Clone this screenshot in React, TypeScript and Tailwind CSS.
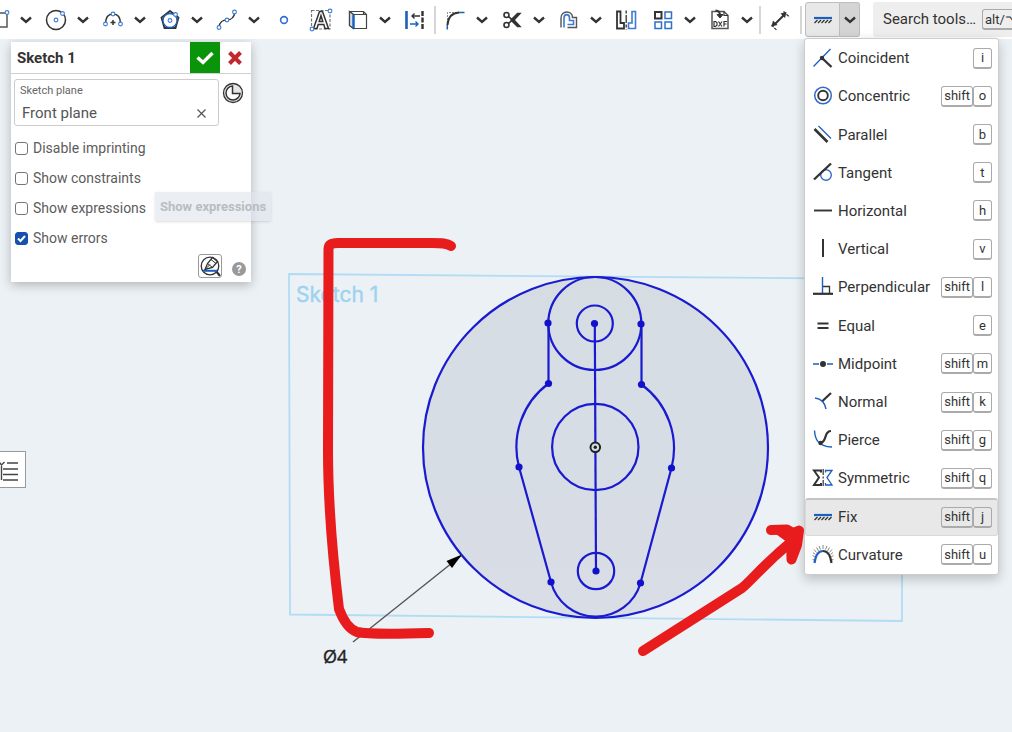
import React from "react";

const INK = "#333333";
const BLUE = "#1b5fbf";
const SKETCH = "#1a1ad0";

type IconProps = { children: React.ReactNode };

function Icon({ children }: IconProps) {
  return (
    <svg width="24" height="24" viewBox="0 0 24 24" fill="none" stroke={INK} strokeWidth="1.5" className="shrink-0" aria-hidden="true">
      {children}
    </svg>
  );
}

function Handle({ x, y, r = 1.9 }: { x: number; y: number; r?: number }) {
  return <circle cx={x} cy={y} r={r} fill="#fff" stroke="#3f7bd0" strokeWidth="1.1" />;
}

const toolIcons = {
  rectangle: (
    <Icon>
      <rect x="3" y="5" width="17" height="14" stroke="#555" />
      <Handle x={20} y={4.5} />
    </Icon>
  ),
  circle: (
    <Icon>
      <circle cx="12" cy="12" r="9.5" />
      <Handle x={12} y={12} />
      <Handle x={18.5} y={5.5} />
    </Icon>
  ),
  arc: (
    <Icon>
      <path d="M4.5 16C4.5 9 7 6 12 6s7.500 3 7.500 10" />
      <path d="M12 12v5M9.500 14.500h5" />
      <Handle x={4.5} y={16} />
      <Handle x={12} y={6} />
      <Handle x={19.5} y={16} />
    </Icon>
  ),
  polygon: (
    <Icon>
      <path d="M12 3L20.500 9.500L17.500 20H6.500L3.500 9.500Z" strokeWidth="1.8" />
      <circle cx="12" cy="12.500" r="7" stroke={BLUE} strokeWidth="1.3" fill="#fff" />
      <Handle x={12} y={12.5} />
      <Handle x={17.5} y={6.5} />
    </Icon>
  ),
  spline: (
    <Icon>
      <path d="M4 19C5 13 8 12 12 12S19 10 20 4" />
      <Handle x={4} y={19.5} />
      <Handle x={12} y={12} />
      <Handle x={19.5} y={4} />
    </Icon>
  ),
  point: (
    <Icon>
      <circle cx="12" cy="12" r="3.400" stroke="#2f70cc" strokeWidth="1.600" />
    </Icon>
  ),
  text: (
    <Icon>
      <rect x="2.500" y="2.500" width="18.500" height="18.500" stroke="#777" strokeWidth="1.200" strokeDasharray="3 1.500" />
      <path d="M4.500 20.500L10.500 3.500h3L19.500 20.500h-3.500L14.800 16.500H9.200L8 20.500ZM10.200 13.500h3.600L12 7.500Z" fill="#fff" />
      <Handle x={21} y={3} />
      <Handle x={3} y={21} />
    </Icon>
  ),
  use: (
    <Icon>
      <path d="M3.500 3.500h14l3 3v14h-13l-4-3ZM3.500 3.500l4 3h13M17.500 3.500v3" stroke="#444" strokeWidth="1.200" />
      <path d="M3.500 3.500l4 3v14l-4-3Z" stroke="#444" strokeWidth="1.200" fill="#cfdcf0" />
      <path d="M7.500 6.500v14" stroke={BLUE} strokeWidth="2.400" />
    </Icon>
  ),
  extend: (
    <Icon>
      <path d="M3.500 3v18" stroke={BLUE} strokeWidth="2.600" />
      <path d="M19.500 3v18" strokeWidth="2.400" strokeDasharray="5 1.500" />
      <path d="M17 8H9M11.500 5.500L9 8l2.500 2.500" strokeWidth="1.400" />
      <path d="M7 16h8M12.500 13.500L15 16l-2.500 2.500" stroke={BLUE} strokeWidth="1.400" />
    </Icon>
  ),
  fillet: (
    <Icon>
      <path d="M4.500 18V4.500H17" stroke="#888" strokeWidth="1" strokeDasharray="2 1" />
      <path d="M4.500 17C5 9 9 5 16 4.500" strokeWidth="2" />
      <path d="M4.300 21.500v-4.500M16 4.500h5.500" stroke={BLUE} strokeWidth="1.500" />
    </Icon>
  ),
  trim: (
    <Icon>
      <g strokeWidth="1.600">
        <circle cx="6.500" cy="7" r="2.500" />
        <circle cx="6.500" cy="17" r="2.500" />
        <path d="M8.500 8.500L12.500 12L8.500 15.500" />
      </g>
      <path d="M11 12L17.500 5.500h2.500L14 12L20 18.500H17.500Z" fill={INK} />
    </Icon>
  ),
  offset: (
    <Icon>
      <path d="M4 19.500V10C4 2 15.500 2 15.500 9.500H19.500V19.500H10.500" stroke="#555" strokeWidth="1.400" />
      <path d="M7 19.500V10C7 5.500 12.500 5.500 12.500 10V12.500H16.500V16.500H10.500" stroke="#3f7bd0" strokeWidth="1.600" />
    </Icon>
  ),
  mirror: (
    <Icon>
      <path d="M3 3.500h3.500v11.500h3.500v5.500H3Z" strokeWidth="1.800" />
      <path d="M12.200 2.500v19" strokeWidth="1.300" strokeDasharray="3 1.500 8 1.500" />
      <path d="M21.500 3.500H18v11.500h-3.500v5.500h7Z" stroke="#3f7bd0" strokeWidth="1.600" />
    </Icon>
  ),
  pattern: (
    <Icon>
      <rect x="4" y="4" width="6.500" height="6.500" strokeWidth="2" />
      <g stroke="#2f70cc" strokeWidth="1.500">
        <rect x="14" y="4" width="6.500" height="6.500" />
        <rect x="4" y="14" width="6.500" height="6.500" />
        <rect x="14" y="14" width="6.500" height="6.500" />
      </g>
    </Icon>
  ),
  dxf: (
    <Icon>
      <path d="M4 3.500h12l4 4V20.500H4Z" stroke="#555" />
      <path d="M16 3.500v4h4" strokeWidth="1.200" />
      <path d="M7.500 2.500c3 0 4.500 2 4.500 5" strokeWidth="2" />
      <path d="M9 6.500l3 3.500l3-3.500Z" fill={INK} strokeWidth="1" />
      <g strokeWidth="1.200">
        <path d="M6 13.500v5h1.500l1.500-1.200v-2.600l-1.500-1.200ZM10.500 13.500l3.500 5M14 13.500l-3.500 5M16 18.500v-5h3M16 16h2.500" />
      </g>
    </Icon>
  ),
  dimension: (
    <Icon>
      <path d="M6.500 16.500L16 7" strokeWidth="2" />
      <path d="M3.500 18.500l1.500-6 4.500 4.500ZM18.500 4l-6 1.500 4.500 4.500Z" fill={INK} stroke="none" />
      <path d="M3.500 17l5 5M15.500 3.500l6 5.500" strokeWidth="1.200" strokeDasharray="3 1" />
    </Icon>
  ),
};

const fixIcon = (
  <Icon>
    <path d="M3 10h18" stroke={BLUE} strokeWidth="2.200" />
    <path d="M3.500 15l3-3M7 15l3-3M10.500 15l3-3M14 15l3-3M17.500 15l3-3" strokeWidth="1.300" />
  </Icon>
);

type Constraint = { label: string; keys: string[]; icon: React.ReactNode };

const constraints: Constraint[] = [
  {
    label: "Coincident",
    keys: ["i"],
    icon: (
      <Icon>
        <path d="M2.500 20.500L19.500 3" stroke={BLUE} strokeWidth="1.300" />
        <path d="M11 12l9.500 9" strokeWidth="2.400" />
        <circle cx="11" cy="12" r="2.200" fill={INK} stroke="none" />
      </Icon>
    ),
  },
  {
    label: "Concentric",
    keys: ["shift", "o"],
    icon: (
      <Icon>
        <circle cx="12" cy="11.500" r="8.300" stroke="#2f6cc8" strokeWidth="1.500" />
        <circle cx="12" cy="11.500" r="4.800" strokeWidth="1.900" />
      </Icon>
    ),
  },
  {
    label: "Parallel",
    keys: ["b"],
    icon: (
      <Icon>
        <path d="M3.500 6L16.500 19" strokeWidth="2.600" />
        <path d="M7.500 3L20 15.500" stroke={BLUE} strokeWidth="1.300" />
      </Icon>
    ),
  },
  {
    label: "Tangent",
    keys: ["t"],
    icon: (
      <Icon>
        <circle cx="15" cy="14" r="5.300" stroke="#2f6cc8" strokeWidth="1.400" />
        <path d="M3 18.500L20 2.500" strokeWidth="2.400" />
      </Icon>
    ),
  },
  { label: "Horizontal", keys: ["h"], icon: <Icon><path d="M3 11.500h18" strokeWidth="1.900" /></Icon> },
  { label: "Vertical", keys: ["v"], icon: <Icon><path d="M12 2v18" strokeWidth="2" /></Icon> },
  {
    label: "Perpendicular",
    keys: ["shift", "l"],
    icon: (
      <Icon>
        <path d="M12 11.500h6.500v6.500" strokeWidth="1.300" />
        <path d="M11.500 2v16" stroke={BLUE} strokeWidth="1.400" />
        <path d="M2 18.800h20" strokeWidth="2.200" />
      </Icon>
    ),
  },
  { label: "Equal", keys: ["e"], icon: <Icon><path d="M6.500 9.500h11M6.500 14h11" strokeWidth="2" /></Icon> },
  {
    label: "Midpoint",
    keys: ["shift", "m"],
    icon: (
      <Icon>
        <path d="M2 12h6M16 12h6" stroke={BLUE} />
        <circle cx="12" cy="12" r="3" fill={INK} stroke="none" />
      </Icon>
    ),
  },
  {
    label: "Normal",
    keys: ["shift", "k"],
    icon: (
      <Icon>
        <path d="M4 8C11 9 14 13 15 19" stroke={BLUE} strokeWidth="1.500" />
        <path d="M11.500 11L20 3" strokeWidth="2.300" />
      </Icon>
    ),
  },
  {
    label: "Pierce",
    keys: ["shift", "g"],
    icon: (
      <Icon>
        <path d="M3.500 2.500C4 10 6 18.500 21 19" stroke={BLUE} strokeWidth="1.400" />
        <path d="M10 15C16 13 13 3 20 3" strokeWidth="2.200" />
        <circle cx="9.500" cy="15" r="2.200" fill={INK} stroke="none" />
      </Icon>
    ),
  },
  {
    label: "Symmetric",
    keys: ["shift", "q"],
    icon: (
      <Icon>
        <path d="M10 6.500V4.500H3L8 11.500L3 19h7v-2" strokeWidth="2" />
        <path d="M12.200 3v17" strokeWidth="1.200" strokeDasharray="6 1.500 2 1.500" />
        <path d="M14.500 6.500V4.500H21L16 11.500L21 19h-6.500v-2" stroke={BLUE} strokeWidth="1.300" />
      </Icon>
    ),
  },
  { label: "Fix", keys: ["shift", "j"], icon: fixIcon },
  {
    label: "Curvature",
    keys: ["shift", "u"],
    icon: (
      <Icon>
        <path
          d="M4 14l-2.500-1.500M4.500 11.500L2 9.500M5.500 9.500L3 6.500M7.500 8L5.500 4.500M9.500 6.500L8 3M12 6V2M14.500 6.500L16 3M16.500 8l2-3.500M18.500 9.500L21 6.500M19.500 11.500l2.500-2M20 14l2.500-1.500M3.500 17l-2-.5M20.500 17l2-.5"
          stroke="#888"
          strokeWidth="1"
        />
        <path d="M12 8C17 8 19.500 13 20.500 20" strokeWidth="2.200" />
        <path d="M3.500 20C4.500 13 7 8 12 8" stroke={BLUE} strokeWidth="2.200" />
      </Icon>
    ),
  },
];

function Chevron() {
  return (
    <svg width="12" height="8" viewBox="0 0 12 8" fill="none" stroke={INK} strokeWidth="2.400" aria-hidden="true">
      <path d="M1 1.500L6 6l5-4.500" />
    </svg>
  );
}

function Tool({ name, label, menu = false }: { name: keyof typeof toolIcons; label: string; menu?: boolean }) {
  return (
    <div className="flex shrink-0">
      <button type="button" aria-label={label} className="flex h-8 w-[34px] items-center justify-center">
        {toolIcons[name]}
      </button>
      {menu && (
        <button type="button" aria-label={`${label} options`} className="flex h-8 w-5 items-center justify-center">
          <Chevron />
        </button>
      )}
    </div>
  );
}

function Key({ children }: { children: React.ReactNode }) {
  return (
    <kbd className="flex h-[21px] min-w-[19px] shrink-0 items-center justify-center rounded-[3px] border border-b-2 border-[#aaaaaa] px-0.5 font-[Roboto,sans-serif] text-[13px] leading-none whitespace-nowrap text-[#333333]">
      {children}
    </kbd>
  );
}

function ConstraintMenu() {
  return (
    <ul className="absolute top-9 -left-px z-20 grid min-h-[537px] w-[195px] auto-rows-fr rounded-[3px] border border-[#cccccc] bg-white shadow-[0_4px_12px_rgba(0,0,0,0.22)]">
      {constraints.map((c) => (
        <li key={c.label} className="flex">
          <button
            type="button"
            className={
              c.label === "Fix"
                ? "flex flex-1 items-center rounded-[3px] border border-t-2 border-[#d8d8d8] border-t-[#c4c4c4] bg-[#e8e8e8] px-[5px]"
                : "flex flex-1 items-center px-1.5"
            }
          >
            {c.icon}
            <span className="ml-[3px] flex-1 text-left text-[15px] leading-5">{c.label}</span>
            <span className="flex">
              {c.keys.map((k) => (
                <Key key={k}>{k}</Key>
              ))}
            </span>
          </button>
        </li>
      ))}
    </ul>
  );
}

function Separator({ last = false }: { last?: boolean }) {
  return <div className={last ? "h-7 w-0.5 shrink-0 bg-[#d6d6d6]" : "-mx-px h-7 w-0.5 shrink-0 bg-[#d6d6d6]"} />;
}

function Toolbar() {
  return (
    <header className="relative z-10 flex h-[39px] items-center gap-[3px] bg-white">
      <div className="-ml-[18px]">
        <Tool name="rectangle" label="Rectangle" menu />
      </div>
      <Tool name="circle" label="Circle" menu />
      <Tool name="arc" label="Arc" menu />
      <Tool name="polygon" label="Polygon" menu />
      <Tool name="spline" label="Spline" menu />
      <Tool name="point" label="Point" />
      <Tool name="text" label="Text" />
      <Tool name="use" label="Use" menu />
      <Tool name="extend" label="Construction" />
      <Separator />
      <Tool name="fillet" label="Fillet" menu />
      <Tool name="trim" label="Trim" menu />
      <Tool name="offset" label="Offset" menu />
      <Tool name="mirror" label="Mirror" />
      <Tool name="pattern" label="Pattern" menu />
      <Tool name="dxf" label="Insert DXF" menu />
      <Separator />
      <Tool name="dimension" label="Dimension" />
      <Separator last />
      <div className="relative flex h-[35px] shrink-0 rounded-[3px]">
        <button type="button" aria-label="Fix" className="flex w-[35px] items-center justify-center rounded-l-[3px] border border-[#bdbdbd] bg-[#e8e8e8]">
          {fixIcon}
        </button>
        <button type="button" aria-label="Constraint options" className="flex w-5 items-center justify-center rounded-r-[3px] border border-l-0 border-[#bdbdbd] bg-[#d4d4d4]">
          <Chevron />
        </button>
        <ConstraintMenu />
      </div>
      <label className="ml-2.5 flex h-[35px] w-[170px] shrink-0 items-center rounded-[3px] bg-[#eeeeee] pl-2.5">
        <input type="text" aria-label="Search tools" placeholder="Search tools…" className="w-[99px] shrink-0 bg-transparent text-[15px] text-[#333333] outline-none placeholder:text-[#333333]" />
        <Key>alt/⌥</Key>
      </label>
    </header>
  );
}

const options = [
  { id: "imprinting", label: "Disable imprinting", checked: false },
  { id: "constraints", label: "Show constraints", checked: false },
  { id: "expressions", label: "Show expressions", checked: false },
  { id: "errors", label: "Show errors", checked: true },
];

function SketchPanel() {
  return (
    <section className="relative mt-[3px] ml-[11px] w-60 bg-white pb-1 shadow-[0_3px_10px_rgba(0,0,0,0.25)]">
      <div className="flex h-8 items-stretch border-b border-[#d0d0d0]">
        <h1 className="flex-1 pl-1.5 text-[15px] leading-8 font-bold text-[#333333]">Sketch 1</h1>
        <button type="button" aria-label="Accept" className="flex w-[30px] items-center justify-center bg-[#0a940a]">
          <svg width="18" height="14" viewBox="0 0 18 14" fill="none" stroke="#fff" strokeWidth="3.400" aria-hidden="true">
            <path d="M1.500 6.500l5.500 5L16.500 2" />
          </svg>
        </button>
        <button type="button" aria-label="Cancel" className="flex w-[31px] items-center justify-center pr-0.5">
          <svg width="14" height="14" viewBox="0 0 14 14" fill="none" stroke="#c1272d" strokeWidth="4" aria-hidden="true">
            <path d="M1.500 1.500l11 11M12.500 1.500L1.500 12.500" />
          </svg>
        </button>
      </div>
      <div className="flex items-start gap-[3px] pt-[5px] pl-[3px]">
        <div className="flex h-[47px] w-[205px] flex-col rounded-[3px] border border-[#cccccc] pt-[3px] pr-[9px] pl-[5px]">
          <label htmlFor="plane" className="text-[11px] leading-4 text-[#666666]">Sketch plane</label>
          <div className="flex items-center pt-0.5 pl-0.5">
            <input id="plane" readOnly value="Front plane" className="h-6 min-w-0 flex-1 text-[15px] text-[#555555] outline-none" />
            <button type="button" aria-label="Clear plane" className="flex w-4 justify-center">
              <svg width="9" height="9" viewBox="0 0 9 9" stroke="#555" strokeWidth="1.200" aria-hidden="true">
                <path d="M.5.5l8 8M8.500.5l-8 8" />
              </svg>
            </button>
          </div>
        </div>
        <button type="button" aria-label="History" className="mt-[3px]">
          <svg width="22" height="22" viewBox="0 0 22 22" fill="none" stroke={INK} aria-hidden="true">
            <circle cx="11" cy="11" r="9.500" strokeWidth="1.300" fill="#e6e6e6" />
            <path d="M10.500 4A7 7 0 1 0 18 11.500H10.500Z" strokeWidth="1.500" fill="#fff" />
          </svg>
        </button>
      </div>
      <div className="mt-[7px] flex flex-col pl-1">
        {options.map((o) => (
          <div key={o.id} className="flex h-[30px] items-center gap-[5px]">
            <span className="relative flex size-[13px]">
              <input
                id={o.id}
                type="checkbox"
                defaultChecked={o.checked}
                className="peer size-[13px] appearance-none rounded-[3px] border border-[#767676] bg-white checked:border-[#1651b0] checked:bg-[#1651b0]"
              />
              <svg viewBox="0 0 13 13" fill="none" stroke="#fff" strokeWidth="2" className="pointer-events-none absolute inset-0 hidden peer-checked:block" aria-hidden="true">
                <path d="M3 6.500l2.500 2.500L10 4" />
              </svg>
            </span>
            <label htmlFor={o.id} className="text-[14px] leading-5 text-[#5c5c5c]">{o.label}</label>
          </div>
        ))}
      </div>
      <div className="flex items-end justify-end gap-2.5 pt-px pr-[5px]">
        <button type="button" aria-label="Final preview" className="flex size-6 items-center justify-center rounded-[3px] border border-[#999999]">
          <svg width="22" height="22" viewBox="0 0 22 22" fill="none" stroke={INK} strokeWidth="1.300" className="shrink-0" aria-hidden="true">
            <circle cx="11" cy="11" r="8.800" />
            <path d="M17 16l4 5" strokeWidth="2.200" />
            <path d="M4 15.800h14" stroke={BLUE} strokeWidth="2" />
            <path d="M6 14.500L8.500 8.500L13.500 2.500L18.500 6.500L13.500 12.500Z" fill="#fff" />
            <path d="M6 14.500L11 9.500M8.500 8.500l5 4M12 4.500l5 4" strokeWidth="1" />
          </svg>
        </button>
        <button type="button" aria-label="Help" className="mb-0.5 flex size-3.5 items-center justify-center rounded-full bg-[#999999] text-[11px] leading-none font-bold text-white">
          ?
        </button>
      </div>
      <div role="tooltip" className="absolute top-[150px] left-[144px] bg-[#dde5eb]/60 px-[5px] py-1 text-[13px] leading-[21px] font-bold whitespace-nowrap text-[#b8bdc0] shadow-sm">
        Show expressions
      </div>
    </section>
  );
}

const points = [
  [548, 323],
  [641, 324],
  [594.5, 323.5],
  [548.5, 383.5],
  [641.5, 384.5],
  [519, 467],
  [671.5, 468],
  [551, 582],
  [640.5, 583],
  [596, 571],
];

function SketchCanvas() {
  return (
    <svg className="absolute inset-0 h-full w-full" role="img" aria-label="Sketch drawing">
      <defs>
        <linearGradient id="face" x1="0" y1="0" x2="0" y2="1">
          <stop offset="0" stopColor="#d5dde3" />
          <stop offset="1" stopColor="#d9dde6" />
        </linearGradient>
      </defs>
      <path d="M289 274L902 279V621L290 614.500Z" fill="none" stroke="#b2dcf4" strokeWidth="1.800" />
      <text x="296" y="302" fill="#9dd3f0" stroke="#9dd3f0" strokeWidth=".4" fontFamily="Inter, sans-serif" fontSize="21">Sketch 1</text>
      <ellipse cx="595.500" cy="447.500" rx="172.500" ry="170.500" fill="url(#face)" />
      <g fill="none" stroke={SKETCH} strokeWidth="2.200">
        <ellipse cx="595.500" cy="447.500" rx="172.500" ry="170.500" />
        <circle cx="594.800" cy="323.500" r="46.500" />
        <circle cx="594.800" cy="323.500" r="18" />
        <circle cx="595.300" cy="447" r="43.200" />
        <circle cx="596" cy="571" r="18.200" />
        <path d="M548.500 323V383.500A79 79 0 0 0 519 467L551 582A46.400 46.400 0 0 0 640.500 583L671.500 468A79 79 0 0 0 641.500 384.500V324" />
        <path d="M594.800 323.500L596 571" />
      </g>
      {points.map(([x, y]) => (
        <circle key={`${x}-${y}`} cx={x} cy={y} r="3.600" fill="#1111cc" />
      ))}
      <circle cx="595.300" cy="447.300" r="4.800" fill="#d8dde3" stroke="#222" strokeWidth="2" />
      <circle cx="595.300" cy="447.300" r="1.700" fill="#222" />
      <path d="M353 642L462 555" stroke="#555" strokeWidth="1.400" />
      <path d="M462 554.500L446.500 561L452 568Z" fill="#000" />
      <text x="323" y="663" fill="#222" stroke="#222" strokeWidth=".4" fontFamily="Open Sans, sans-serif" fontSize="18">Ø4</text>
    </svg>
  );
}

function Markup() {
  return (
    <svg className="pointer-events-none absolute inset-0 z-30 h-full w-full" fill="none" stroke="#e81c1c" strokeWidth="10" strokeLinecap="round" strokeLinejoin="round" aria-hidden="true">
      <path d="M451 246C447 243 442 243 432 243H338Q328.500 243 328.500 249L328 450C328 505 333 560 339 609Q346 628 357 632C368 634.500 395 634 429 633" />
      <path d="M643 651L742 588C753 579 762 566 791 542" />
      <path d="M771 530.500L788 530L792 532L799 530L797 547L792 560L791 545Z" fill="#e81c1c" stroke="none" />
      <path d="M771 530L787 529.500L793 533L799 530.500L797 545L791.500 559.500L791 535" />
    </svg>
  );
}

export default function App() {
  return (
    <main className="relative min-h-screen overflow-hidden bg-[#ecf1f5] font-[Roboto,sans-serif] text-[#333333]">
      <SketchCanvas />
      <Toolbar />
      <SketchPanel />
      <div className="relative mt-[169px] flex">
        <button type="button" aria-label="Feature list" className="flex h-[37px] w-[26px] items-center border border-l-0 border-[#999999] bg-white">
          <svg width="20" height="24" viewBox="0 0 20 24" fill="none" stroke="#444" strokeWidth="1.400" aria-hidden="true">
            <path d="M7 5h11M3 11h15M3 16.500h15M3 22h15M1.500 8v14M-1 4l2.500 3L4.500 4" />
          </svg>
        </button>
      </div>
      <Markup />
    </main>
  );
}
